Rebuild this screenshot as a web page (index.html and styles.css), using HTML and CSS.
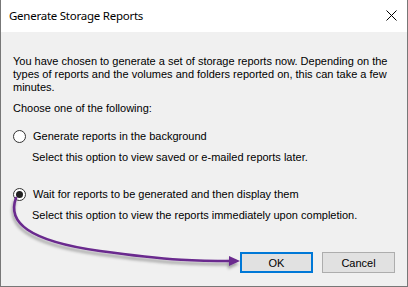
FILE: index.html
```html
<!DOCTYPE html>
<html lang="en">
<head>
  <meta charset="UTF-8">
  <title>Generate Storage Reports</title>
  <link rel="stylesheet" href="styles.css">
</head>
<body>
  <div class="window">
    <div class="titlebar">
      <span class="title">Generate Storage Reports</span>
      <svg class="close" width="11" height="11" viewBox="0 0 11 11">
        <path d="M0.5 0.5 L10.5 10.5 M10.5 0.5 L0.5 10.5" stroke="#000" stroke-width="1" fill="none"/>
      </svg>
    </div>

    <div class="content">
      <p class="intro">You have chosen to generate a set of storage reports now. Depending on the<br>types of reports and the volumes and folders reported on, this can take a few<br>minutes.</p>
      <p class="prompt">Choose one of the following:</p>

      <label class="option first">
        <span class="radio"></span>
        Generate reports in the background
      </label>
      <p class="hint">Select this option to view saved or e-mailed reports later.</p>

      <label class="option second">
        <span class="radio checked"></span>
        Wait for reports to be generated and then display them
      </label>
      <p class="hint">Select this option to view the reports immediately upon completion.</p>

      <!-- dialog buttons -->
      <div class="buttons">
        <button class="btn default">OK</button>
        <button class="btn">Cancel</button>
      </div>
    </div>

    <svg class="arrow" width="408" height="287" viewBox="0 0 408 287">
      <defs>
        <filter id="shade" x="-10%" y="-10%" width="130%" height="140%">
          <feDropShadow dx="-1" dy="3" stdDeviation="1.6" flood-color="#000" flood-opacity="0.35"/>
        </filter>
      </defs>
      <g filter="url(#shade)">
        <path d="M16 198 C 7 222, 28 241, 100 251 S 200 261, 233 261" stroke="#6a2a8e" stroke-width="2.6" fill="none" stroke-linecap="round"/>
        <polygon points="229,256 240,261 229,266" fill="#6a2a8e"/>
      </g>
    </svg>
  </div>
</body>
</html>
```

FILE: styles.css
```css
body {
  margin: 0;
  font-family: "Liberation Sans", Arial, sans-serif;
  font-size: 11px;
  color: #000;
}
.window {
  position: relative;
  width: 408px;
  height: 287px;
  box-sizing: border-box;
  border: 1px solid #777;
  border-top: none;
  background: #f0f0f0;
  display: flex;
  flex-direction: column;
}
.titlebar {
  height: 31px;
  background: #fff;
  display: flex;
  align-items: center;
  justify-content: space-between;
  padding: 0 9px 1px 8px;
  flex-shrink: 0;
}
.title {
  font-family: "Noto Sans", sans-serif;
  font-size: 11.5px;
  letter-spacing: -0.25px;
}
.close {
  margin-right: 1px;
  margin-bottom: 1px;
}
.content {
  flex: 1;
  display: flex;
  flex-direction: column;
  padding: 0 12px 0 12px;
  line-height: 13px;
}
p {
  margin: 0;
}
.intro {
  margin-top: 23px;
}
.prompt {
  margin-top: 8px;
}
.option {
  display: flex;
  align-items: center;
  gap: 7px;
}
.option.first {
  margin-top: 15px;
}
.option.second {
  margin-top: 24px;
}
.radio {
  width: 11px;
  height: 11px;
  border: 1px solid #333;
  border-radius: 50%;
  background: #fff;
  display: flex;
  align-items: center;
  justify-content: center;
  margin-top: -1px;
}
.radio.checked::after {
  content: "";
  width: 7px;
  height: 7px;
  border-radius: 50%;
  background: #222;
}
.hint {
  margin-top: 8px;
  margin-left: 19px;
}
.buttons {
  margin-top: auto;
  margin-bottom: 13px;
  display: flex;
  justify-content: flex-end;
  gap: 9px;
}
.btn {
  width: 73px;
  height: 21px;
  box-sizing: border-box;
  background: #e1e1e1;
  border: 1px solid #adadad;
  font-family: "Liberation Sans", Arial, sans-serif;
  font-size: 11px;
  color: #000;
  padding: 0;
}
.btn.default {
  border: 2px solid #0078d7;
}
.arrow {
  position: absolute;
  left: -1px;
  top: 0;
  pointer-events: none;
}
```
